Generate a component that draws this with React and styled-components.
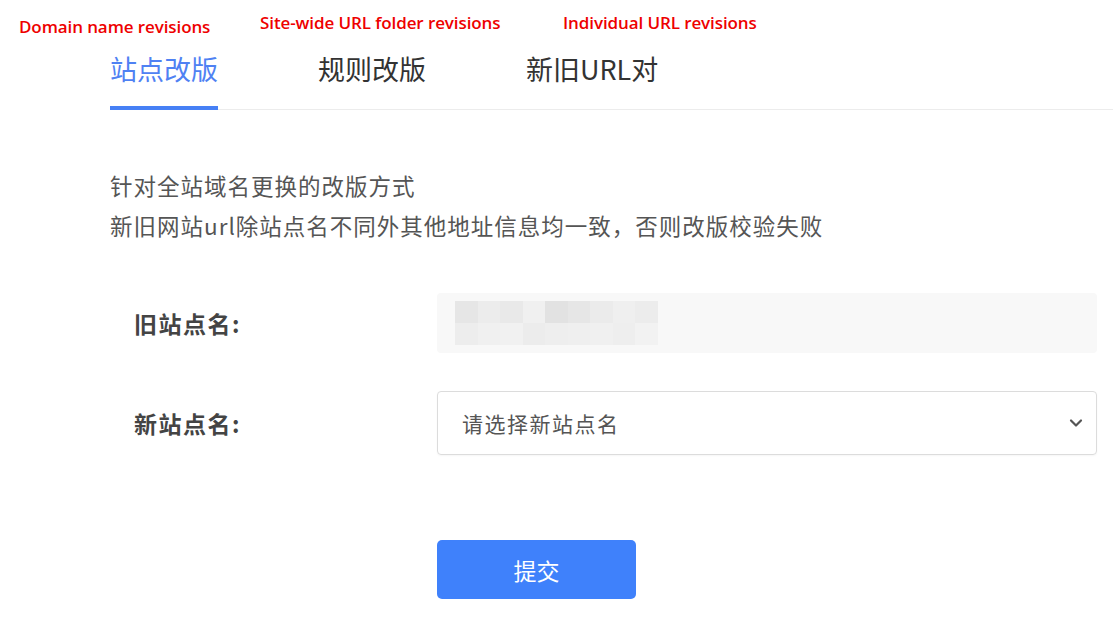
import React from 'react';
import styled, { createGlobalStyle } from 'styled-components';

const GlobalStyle = createGlobalStyle`
  html, body {
    margin: 0;
    padding: 0;
    background: #ffffff;
  }
  body {
    font-family: "Noto Sans CJK SC", "Noto Sans", sans-serif;
    width: 1113px;
    height: 624px;
    overflow: hidden;
  }
`;

const Page = styled.div`
  display: flex;
  flex-direction: column;
  width: 1113px;
  height: 624px;
`;

const NoteRow = styled.div`
  display: grid;
  grid-template-columns: 241px 303px 1fr;
  padding-left: 19px;
  align-items: start;
  height: 44px;
`;

const Note = styled.div`
  font-family: "Open Sans", "Liberation Sans", sans-serif;
  font-weight: 600;
  font-size: 17px;
  color: #ee0000;
  letter-spacing: -0.1px;
  margin-top: ${p => p.top}px;
  white-space: nowrap;
`;

const TabBar = styled.div`
  display: flex;
  margin-left: 110px;
  border-bottom: 1px solid #ececec;
`;

const Tab = styled.div`
  font-size: 27px;
  line-height: 40px;
  padding-top: 5px;
  padding-bottom: 17px;
  margin-right: 100px;
  color: ${p => (p.active ? '#4f81f3' : '#333333')};
  border-bottom: 4px solid ${p => (p.active ? '#4680f5' : 'transparent')};
  margin-bottom: -1px;
`;

const Body = styled.div`
  display: flex;
  flex-direction: column;
  padding-left: 110px;
  padding-top: 55px;
`;

const Desc = styled.div`
  font-size: 22.5px;
  letter-spacing: 1px;
  line-height: 40px;
  color: #555555;
  white-space: nowrap;
`;

const Form = styled.div`
  display: flex;
  flex-direction: column;
  margin-top: 48px;
  padding-left: 110px;
  gap: 38px;
`;

const Row = styled.div`
  display: grid;
  grid-template-columns: 327px 660px;
  align-items: center;
`;

const Label = styled.div`
  padding-left: 24px;
  font-size: 23px;
  letter-spacing: 1.5px;
  font-weight: 700;
  color: #444444;
`;

const ReadonlyBox = styled.div`
  height: 60px;
  background: #f8f8f8;
  border-radius: 4px;
  display: flex;
  align-items: center;
  padding-left: 18px;
`;

const Mosaic = styled.div`
  display: grid;
  grid-template-columns: repeat(9, 22.5px);
  grid-template-rows: 22px 22px;
`;

const Cell = styled.div`
  background: ${p => p.c};
`;

const Select = styled.div`
  height: 62px;
  border: 1px solid #dcdcdc;
  border-radius: 4px;
  display: flex;
  align-items: center;
  justify-content: space-between;
  padding: 0 12px 0 24px;
  box-shadow: 0 1px 2px rgba(0, 0, 0, 0.04);
`;

const Placeholder = styled.span`
  font-size: 21px;
  letter-spacing: 1.5px;
  color: #555555;
`;

const Submit = styled.button`
  margin-top: 85px;
  margin-left: 437px;
  width: 199px;
  height: 59px;
  border: none;
  border-radius: 5px;
  background: #3f81fb;
  color: #ffffff;
  font-family: "Noto Sans CJK SC", "Noto Sans", sans-serif;
  font-size: 23px;
  cursor: pointer;
`;

const mosaic = [
  '#e6e6e6', '#ececec', '#e9e9e9', '#f0f0f0', '#e2e2e2', '#e6e6e6', '#ebebeb', '#efefef', '#ececec',
  '#ededed', '#f0f0f0', '#f1f1f1', '#ececec', '#eeeeee', '#efefef', '#f0f0f0', '#eeeeee', '#f2f2f2',
];

function Chevron() {
  return (
    <svg width="16" height="16" viewBox="0 0 16 16" fill="none">
      <path d="M3 5.5 L8 10.5 L13 5.5" stroke="#555" strokeWidth="2.2" strokeLinecap="round" strokeLinejoin="round" />
    </svg>
  );
}

export default function App() {
  return (
    <Page>
      <GlobalStyle />
      <NoteRow>
        <Note top={15}>Domain name revisions</Note>
        <Note top={11}>Site-wide URL folder revisions</Note>
        <Note top={11}>Individual URL revisions</Note>
      </NoteRow>
      <TabBar>
        <Tab active>站点改版</Tab>
        <Tab>规则改版</Tab>
        <Tab>新旧URL对</Tab>
      </TabBar>
      <Body>
        <Desc>针对全站域名更换的改版方式</Desc>
        <Desc>新旧网站url除站点名不同外其他地址信息均一致，否则改版校验失败</Desc>
      </Body>
      <Form>
        <Row>
          <Label>旧站点名:</Label>
          <ReadonlyBox>
            <Mosaic>
              {mosaic.map((c, i) => <Cell key={i} c={c} />)}
            </Mosaic>
          </ReadonlyBox>
        </Row>
        <Row>
          <Label>新站点名:</Label>
          <Select>
            <Placeholder>请选择新站点名</Placeholder>
            <Chevron />
          </Select>
        </Row>
      </Form>
      <Submit>提交</Submit>
    </Page>
  );
}
